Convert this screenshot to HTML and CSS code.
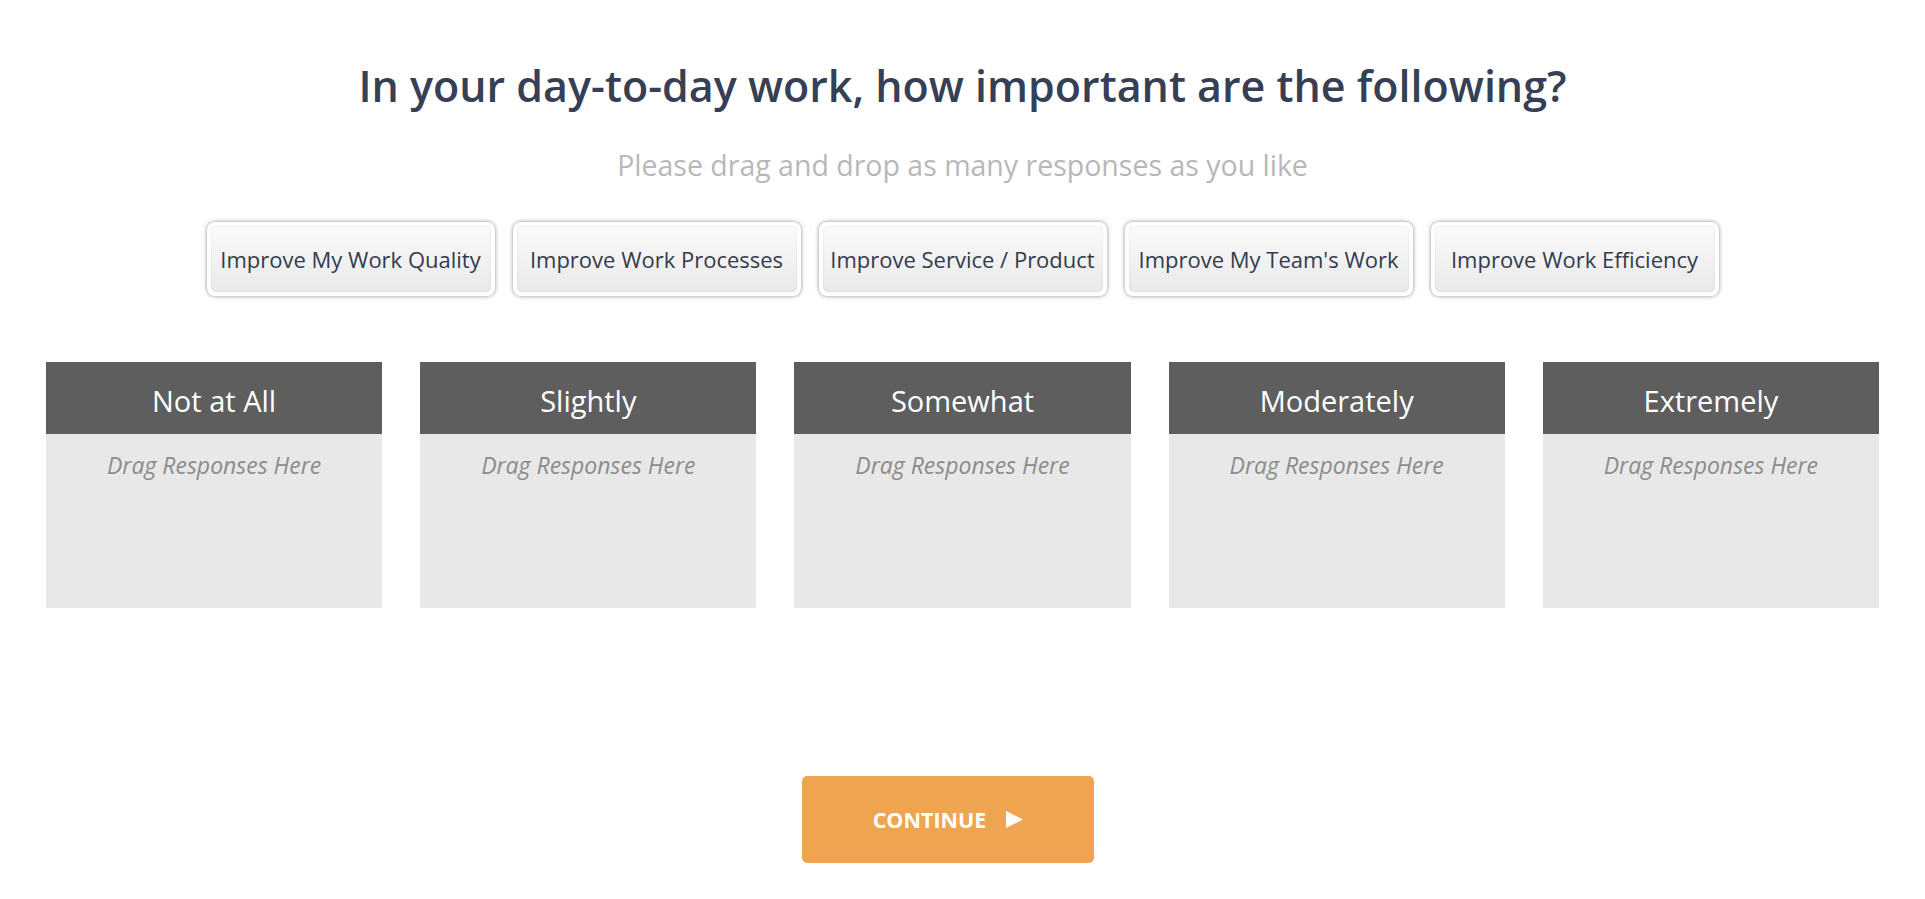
FILE: index.html
```html
<!DOCTYPE html>
<html lang="en">
<head>
<meta charset="utf-8">
<title>Importance sort</title>
<link rel="stylesheet" href="styles.css">
</head>
<body>
<main class="survey">
  <h1 class="question">In your day-to-day work, how important are the following?</h1>
  <p class="hint">Please drag and drop as many responses as you like</p>

  <div class="responses">
    <div class="response"><span class="response-face">Improve My Work Quality</span></div>
    <div class="response"><span class="response-face">Improve Work Processes</span></div>
    <div class="response"><span class="response-face">Improve Service / Product</span></div>
    <div class="response"><span class="response-face">Improve My Team's Work</span></div>
    <div class="response"><span class="response-face">Improve Work Efficiency</span></div>
  </div>

  <div class="buckets">
    <section class="bucket">
      <h2 class="bucket-title">Not at All</h2>
      <div class="bucket-drop">Drag Responses Here</div>
    </section>
    <section class="bucket">
      <h2 class="bucket-title">Slightly</h2>
      <div class="bucket-drop">Drag Responses Here</div>
    </section>
    <section class="bucket">
      <h2 class="bucket-title">Somewhat</h2>
      <div class="bucket-drop">Drag Responses Here</div>
    </section>
    <section class="bucket">
      <h2 class="bucket-title">Moderately</h2>
      <div class="bucket-drop">Drag Responses Here</div>
    </section>
    <section class="bucket">
      <h2 class="bucket-title">Extremely</h2>
      <div class="bucket-drop">Drag Responses Here</div>
    </section>
  </div>

  <div class="actions">
    <button class="continue" type="button">
      <span>CONTINUE</span>
      <svg class="continue-arrow" width="17" height="17" viewBox="0 0 17 17" aria-hidden="true">
        <path d="M0 0 L17 8.5 L0 17 Z" fill="#ffffff"/>
      </svg>
    </button>
  </div>
</main>
</body>
</html>
```

FILE: styles.css
```css
html, body {
  margin: 0;
  padding: 0;
  background: #ffffff;
}

body {
  font-family: "Open Sans", "Liberation Sans", Arial, sans-serif;
  color: #363f55;
}

.survey {
  padding: 61px 46px 0 46px;
}

.question {
  margin: 0;
  font-size: 43px;
  line-height: 50px;
  font-weight: 600;
  color: #363f55;
  text-align: center;
}

.hint {
  margin: 37px 0 0 0;
  font-size: 28.5px;
  line-height: 34px;
  color: #b8b8b8;
  text-align: center;
}

/* draggable response chips: white rim around a shaded face */
.responses {
  margin-top: 40px;
  display: flex;
  justify-content: center;
  gap: 18px;
}

.response {
  box-sizing: border-box;
  width: 288px;
  height: 74px;
  padding: 4px;
  border-radius: 8px;
  background: #ffffff;
  box-shadow: 0 0 4px rgba(0, 0, 0, 0.45);
}

.response-face {
  box-sizing: border-box;
  height: 100%;
  display: flex;
  align-items: center;
  justify-content: center;
  border-radius: 5px;
  background: linear-gradient(#fbfbfb, #e9e9e9);
  box-shadow: inset 0 0 2px rgba(0, 0, 0, 0.12);
  font-size: 22px;
  color: #333b4c;
  white-space: nowrap;
}

/* drop columns */
.buckets {
  margin-top: 66px;
  display: grid;
  grid-template-columns: repeat(5, 1fr);
  gap: 38px;
}

.bucket-title {
  box-sizing: border-box;
  margin: 0;
  height: 72px;
  padding-top: 6px;
  line-height: 66px;
  background: #5e5e5e;
  color: #ffffff;
  font-size: 29px;
  font-weight: 400;
  text-align: center;
}

.bucket-drop {
  box-sizing: border-box;
  height: 174px;
  padding-top: 16px;
  background: #e8e8e8;
  color: #8c8c8c;
  font-size: 23px;
  line-height: 30px;
  font-style: italic;
  text-align: center;
}

.actions {
  margin-top: 168px;
  display: flex;
  justify-content: center;
  padding-right: 29px;
}

.continue {
  width: 292px;
  height: 87px;
  border: 0;
  border-radius: 5px;
  background: #efa54f;
  color: #ffffff;
  font-family: "Open Sans", "Liberation Sans", Arial, sans-serif;
  font-size: 21.5px;
  font-weight: 700;
  display: flex;
  align-items: center;
  justify-content: center;
  gap: 20px;
  padding: 0;
}

.continue-arrow {
  display: block;
}
```
